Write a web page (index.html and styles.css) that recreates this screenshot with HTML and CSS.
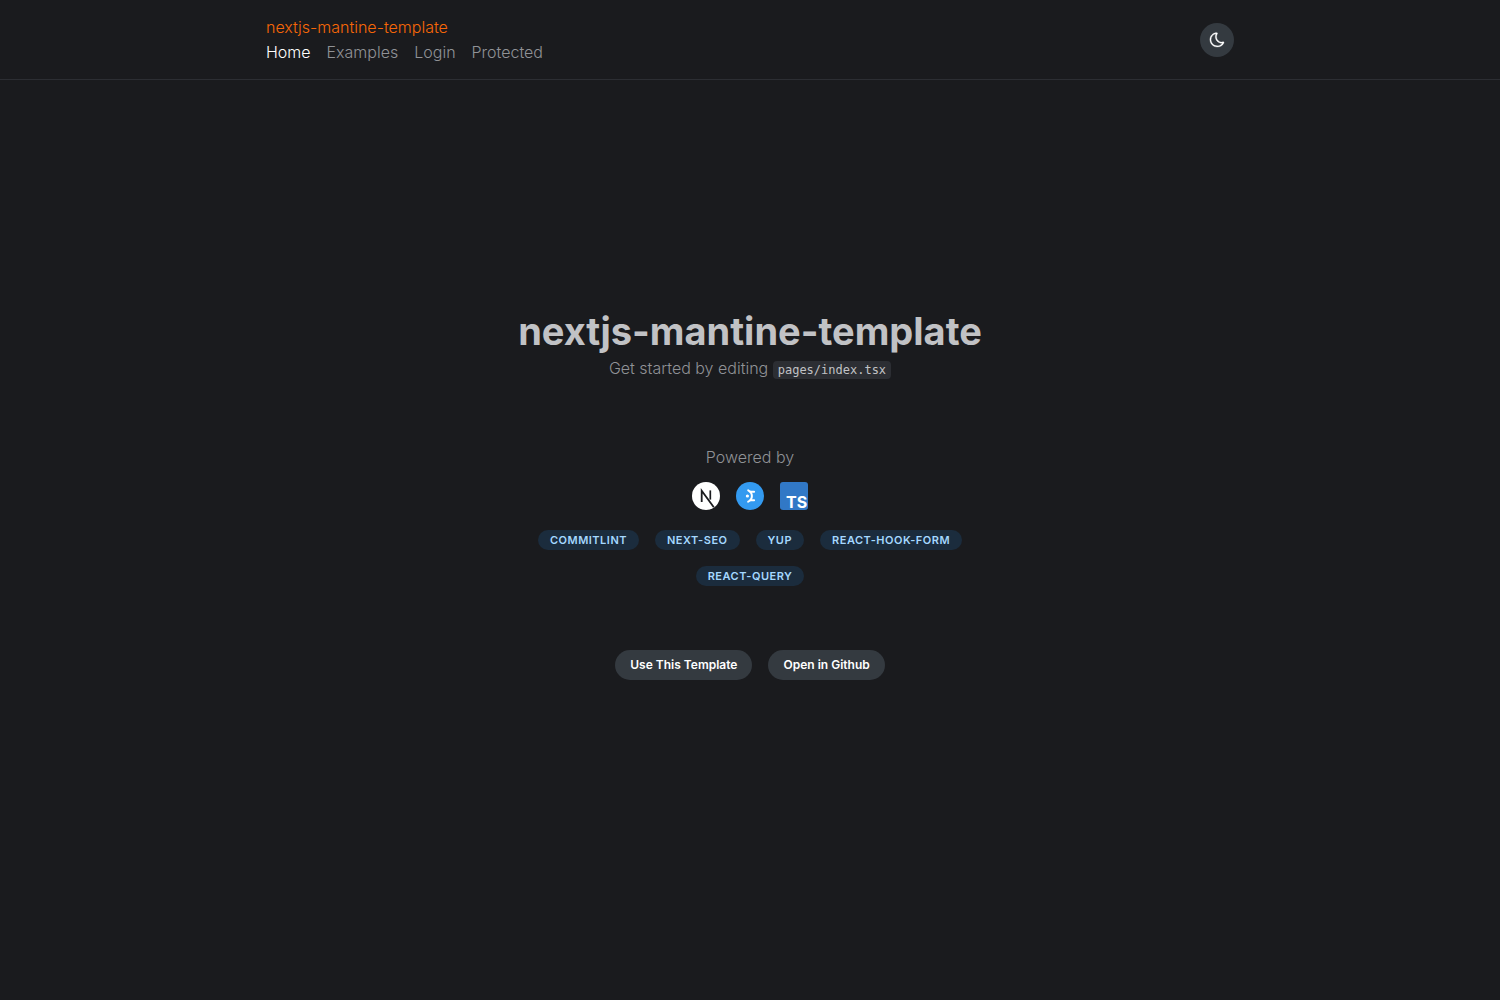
FILE: index.html
```html
<!DOCTYPE html>
<html lang="en">
<head>
<meta charset="utf-8">
<meta name="viewport" content="width=device-width, initial-scale=1">
<title>nextjs-mantine-template</title>
<link rel="stylesheet" href="styles.css">
</head>
<body>
<header class="header">
  <div class="container header-inner">
    <div class="header-left">
      <a class="brand" href="#">nextjs-mantine-template</a>
      <nav class="nav">
        <a class="nav-link active" href="#">Home</a>
        <a class="nav-link" href="#">Examples</a>
        <a class="nav-link" href="#">Login</a>
        <a class="nav-link" href="#">Protected</a>
      </nav>
    </div>
    <button class="scheme-toggle" type="button" aria-label="Toggle color scheme">
      <svg width="16" height="16" viewBox="0 0 15 15" fill="currentColor" stroke="currentColor" stroke-width="0.25" aria-hidden="true"><path fill-rule="evenodd" clip-rule="evenodd" d="M7.1 0.66C7.4 0.5 7.8 0.7 7.95 0.95C8.1 1.2 8.05 1.5 7.9 1.75C7.4 2.5 7.1 3.4 7.1 4.4C7.1 7.3 9.4 9.4 12.1 9.4C12.5 9.4 12.9 9.35 13.3 9.25C13.6 9.2 13.9 9.3 14.05 9.55C14.2 9.8 14.2 10.1 14.05 10.35C12.9 12.6 10.5 14.1 7.8 14.1C3.9 14.1 0.8 11 0.8 7.1C0.8 3.8 3.1 1.2 6.2 0.6C6.5 0.55 6.8 0.58 7.1 0.66ZM6.4 1.75C3.8 2.3 1.95 4.5 1.95 7.1C1.95 10.3 4.6 12.95 7.8 12.95C9.7 12.95 11.4 12.05 12.5 10.55C8.9 10.7 5.9 8 5.9 4.4C5.9 3.45 6.1 2.55 6.4 1.75Z"/></svg>
    </button>
  </div>
</header>
<main class="main">
  <section class="intro">
    <h1 class="title">nextjs-mantine-template</h1>
    <p class="text">Get started by editing <code class="code">pages/index.tsx</code></p>
  </section>
  <section class="powered">
    <p class="text">Powered by</p>
    <div class="logos">
      <a href="#" class="logo" aria-label="Next.js">
        <svg width="28" height="28" viewBox="0 0 28 28"><circle cx="14" cy="14" r="14" fill="#fff"/><path d="M9.7 20V8.8L21.8 25.2" fill="none" stroke="#1a1b1e" stroke-width="1.8"/><path d="M18.3 8.4V17.6" stroke="#1a1b1e" stroke-width="1.7"/></svg>
      </a>
      <a href="#" class="logo" aria-label="Mantine">
        <svg width="28" height="28" viewBox="0 0 28 28"><circle cx="14" cy="14" r="14" fill="#339af0"/><g fill="none" stroke="#fff" stroke-width="2" stroke-linecap="round" stroke-linejoin="round"><path d="M12.2 8.3Q15.9 10.2 15.9 14Q15.9 17.8 12.2 19.7"/><path d="M14.4 9.7H18.1M14.4 18.3H18.1"/></g><circle cx="11.4" cy="14" r="1.6" fill="#fff"/></svg>
      </a>
      <a href="#" class="logo" aria-label="TypeScript">
        <svg width="28" height="28" viewBox="0 0 28 28"><rect width="28" height="28" rx="3" fill="#3178c6"/><text class="ts-mark" x="6" y="26">TS</text></svg>
      </a>
    </div>
    <ul class="badges">
      <li class="badge">commitlint</li>
      <li class="badge">next-seo</li>
      <li class="badge">yup</li>
      <li class="badge">react-hook-form</li>
      <li class="badge">react-query</li>
    </ul>
  </section>
  <div class="actions">
    <a class="button" href="#">Use This Template</a>
    <a class="button" href="#">Open in Github</a>
  </div>
</main>
</body>
</html>
```
FILE: styles.css
```css
*, *::before, *::after { box-sizing: border-box; }

body {
  display: flex;
  flex-direction: column;
  min-height: 100vh;
  margin: 0;
  background: #1a1b1e;
  color: #c1c2c5;
  font-family: Inter, "Liberation Sans", sans-serif;
  font-size: 16px;
  line-height: 25px;
}

a { color: inherit; text-decoration: none; }

.header { border-bottom: 1px solid #2c2e33; }

.container {
  width: 100%;
  max-width: 1000px;
  margin: 0 auto;
  padding: 0 16px;
}

.header-inner {
  display: flex;
  align-items: center;
  justify-content: space-between;
  min-height: 79px;
}

.header-left { display: flex; flex-direction: column; align-items: flex-start; font-weight: 300; }
.brand { color: #f76707; }
.nav { display: flex; gap: 16px; }
.nav-link { color: #909296; }
.nav-link.active { color: #fff; }

.scheme-toggle {
  display: flex;
  align-items: center;
  justify-content: center;
  width: 34px;
  height: 34px;
  padding: 0;
  border: 0;
  border-radius: 50%;
  background: #343a40;
  color: #fff;
}

.main {
  flex: 1;
  display: flex;
  flex-direction: column;
  align-items: center;
  justify-content: center;
  gap: 64px;
  padding: 0 16px 94px;
}

.intro { text-align: center; }
.title { margin: 0; font-size: 38px; line-height: 50px; font-weight: 700; }
.text { margin: 0; color: #909296; font-weight: 300; }

.code {
  padding: 2px 5px;
  border-radius: 4px;
  background: #2c2e33;
  color: #c1c2c5;
  font-family: "DejaVu Sans Mono", monospace;
  font-size: 12px;
  line-height: 16px;
  font-weight: 400;
}

.powered {
  display: flex;
  flex-direction: column;
  align-items: center;
  width: 100%;
  max-width: 448px;
}

.logos { display: flex; gap: 16px; margin: 12px 0 20px; }
.logo { display: flex; }
.logo svg { overflow: visible; }
.ts-mark { fill: #fff; font-size: 16px; font-weight: 700; }

.badges {
  display: flex;
  flex-wrap: wrap;
  justify-content: center;
  gap: 16px;
  margin: 0;
  padding: 0;
  list-style: none;
}

.badge {
  padding: 0 12px;
  border-radius: 32px;
  background: #1b2c3d;
  color: #a5d8ff;
  font-size: 11px;
  line-height: 20px;
  font-weight: 600;
  letter-spacing: 0.5px;
  text-transform: uppercase;
}

.actions { display: flex; gap: 16px; }

.button {
  padding: 0 15px;
  border-radius: 32px;
  background: #343a40;
  color: #fff;
  font-size: 12px;
  line-height: 30px;
  font-weight: 600;
}
```
